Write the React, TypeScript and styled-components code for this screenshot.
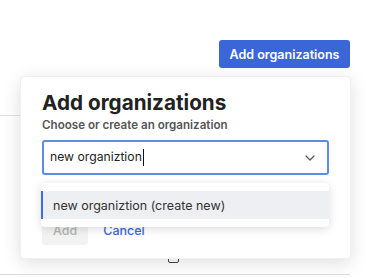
import styled, { createGlobalStyle } from "styled-components";

const GlobalStyle = createGlobalStyle`
  body {
    margin: 0;
    background: #ffffff;
    font-family: Inter, "Liberation Sans", sans-serif;
  }
`;

const Page = styled.div`
  position: relative;
  width: 375px;
  height: 278px;
  overflow: hidden;
`;

const Toolbar = styled.div`
  display: flex;
  justify-content: flex-end;
  padding: 40px 25px 0 0;
`;

const PrimaryButton = styled.button`
  height: 28px;
  width: 131px;
  border: none;
  border-radius: 3px;
  background: #3a66d8;
  color: #ffffff;
  font-family: Inter, "Liberation Sans", sans-serif;
  font-size: 12.5px;
  font-weight: 600;
  padding: 0;
`;

const Table = styled.div`
  margin-top: 47px;
  width: 350px;
  height: 160px;
  box-sizing: border-box;
  border-top: 1px solid #e2e2e2;
  border-bottom: 1px solid #dcdcdc;
  display: flex;
  justify-content: center;
  align-items: flex-end;
  padding-bottom: 11px;
`;

const RowIcon = styled.div`
  width: 9px;
  height: 11px;
  margin-left: -4px;
  border: 1.5px solid #444;
  border-radius: 2px;
`;

const Popover = styled.div`
  position: absolute;
  left: 20px;
  top: 76px;
  width: 331px;
  height: 183px;
  box-sizing: border-box;
  background: #ffffff;
  border-radius: 4px;
  border: 1px solid #f0f0f0;
  box-shadow: 0 4px 18px rgba(0, 0, 0, 0.13);
  padding: 14px 21px 0 21px;
`;

const Title = styled.h2`
  margin: 0;
  font-size: 20.7px;
  line-height: 24px;
  font-weight: 700;
  color: #222222;
`;

const Subtitle = styled.div`
  margin-top: 3px;
  font-size: 11.6px;
  line-height: 14px;
  font-weight: 600;
  color: #555555;
`;

const Field = styled.div`
  position: relative;
  margin-top: 8px;
  width: 287px;
`;

const Input = styled.div`
  height: 35px;
  box-sizing: border-box;
  border: 2px solid #5c8ce8;
  border-radius: 3px;
  display: flex;
  align-items: center;
  justify-content: space-between;
  padding: 0 12px 0 6px;
  font-size: 12.2px;
  color: #222;
`;

const Caret = styled.span`
  display: inline-block;
  width: 1px;
  height: 17px;
  background: #111;
  vertical-align: middle;
  margin-left: 1px;
`;

const Actions = styled.div`
  display: flex;
  align-items: center;
  gap: 7px;
  margin-top: 40px;
`;

const GhostButton = styled.button<{ $link?: boolean }>`
  height: 30px;
  border: none;
  border-radius: 3px;
  font-family: Inter, "Liberation Sans", sans-serif;
  font-size: 12.5px;
  font-weight: 500;
  padding: 0 ${(p) => (p.$link ? "8px" : "11px")};
  background: ${(p) => (p.$link ? "transparent" : "#f2f2f2")};
  color: ${(p) => (p.$link ? "#3a6ad6" : "#b4b4b4")};
`;

const Menu = styled.div`
  position: absolute;
  left: -1px;
  top: 43px;
  width: 288px;
  background: #ffffff;
  border-radius: 4px;
  box-shadow: 0 2px 10px rgba(0, 0, 0, 0.14);
  padding: 8px 0;
`;

const MenuItem = styled.div<{ $active?: boolean }>`
  height: 28px;
  display: flex;
  align-items: center;
  padding-left: 10px;
  font-size: 12.5px;
  color: #333;
  background: ${(p) => (p.$active ? "#eeeff2" : "transparent")};
  border-left: 2px solid ${(p) => (p.$active ? "#3d6fdc" : "transparent")};
`;

const Chevron = () => (
  <svg width="10" height="6" viewBox="0 0 10 6" fill="none">
    <path d="M1 1l4 4 4-4" stroke="#555" strokeWidth="1.2" strokeLinecap="round" strokeLinejoin="round" />
  </svg>
);

export default function App() {
  return (
    <Page>
      <GlobalStyle />
      <Toolbar>
        <PrimaryButton>Add organizations</PrimaryButton>
      </Toolbar>
      <Table>
        <RowIcon />
      </Table>
      <Popover>
        <Title>Add organizations</Title>
        <Subtitle>Choose or create an organization</Subtitle>
        <Field>
          <Input>
            <span>
              new organiztion
              <Caret />
            </span>
            <Chevron />
          </Input>
          <Menu>
            <MenuItem $active>new organiztion (create new)</MenuItem>
          </Menu>
        </Field>
        <Actions>
          <GhostButton>Add</GhostButton>
          <GhostButton $link>Cancel</GhostButton>
        </Actions>
      </Popover>
    </Page>
  );
}
